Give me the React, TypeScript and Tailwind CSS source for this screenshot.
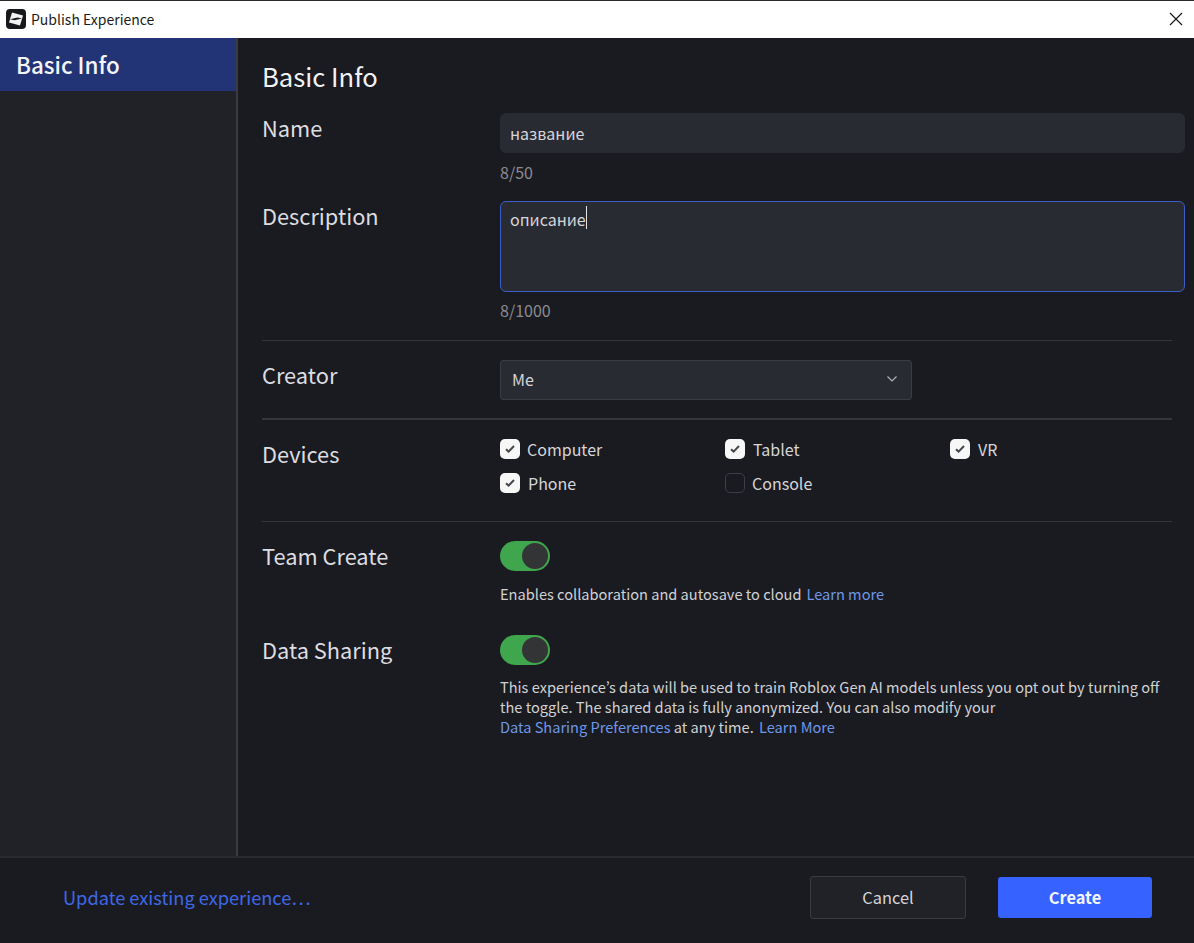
const Check = () => (
  <span className="flex h-5 w-5 items-center justify-center rounded-[5px] bg-[#f7f7f8]">
    <svg width="12" height="10" viewBox="0 0 12 10" fill="none">
      <path d="M2 5.2 4.6 7.6 10 2" stroke="#45474d" strokeWidth="2" />
    </svg>
  </span>
);

const Device = ({ label, checked = true, gap }: { label: string; checked?: boolean; gap: string }) => (
  <div className={`flex h-5 items-center ${gap}`}>
    {checked ? <Check /> : <span className="h-5 w-5 rounded-[5px] border border-[#3c3e45]" />}
    <span className="text-[16px] leading-5 text-[#d5d6d9]">{label}</span>
  </div>
);

const Toggle = () => (
  <div className="flex h-[30px] w-[50px] items-center justify-end rounded-full bg-[#3fa64e] pr-[2px]">
    <span className="h-[26px] w-[26px] rounded-full bg-[#333436]" />
  </div>
);

const Label = ({ children, className = "" }: { children: string; className?: string }) => (
  <div className={`w-[238px] shrink-0 text-[21.8px] leading-8 text-[#dcdde0] ${className}`}>{children}</div>
);

export default function App() {
  return (
    <div
      className="flex h-[943px] w-[1194px] flex-col overflow-hidden bg-[#1a1b20]"
      style={{ fontFamily: '"Noto Sans CJK JP", "Noto Sans", sans-serif' }}
    >
      <div className="flex h-[38px] shrink-0 items-center justify-between border-t border-t-[#2a2a2a] bg-white pb-[1px] pl-[6px] pr-[11px]">
        <div className="flex items-center gap-[5px]">
          <svg width="20" height="20" viewBox="0 0 20 20">
            <rect width="20" height="20" rx="4" fill="#17181b" />
            <path d="M6 3.6 17 6.4 14 16.6 3 13.6Z" fill="#f2f2f2" />
            <path d="M4 10.2 11.5 8.6 16 9.4 8.5 11.2Z" fill="#17181b" />
          </svg>
          <span className="text-[14px] leading-5 text-[#1c1c1c]">Publish Experience</span>
        </div>
        <svg width="14" height="14" viewBox="0 0 14 14" stroke="#111" strokeWidth="1.1">
          <path d="M1 1 13 13M13 1 1 13" />
        </svg>
      </div>

      <div className="flex min-h-0 flex-1">
        <aside className="w-[238px] shrink-0 border-r-2 border-r-[#3a3b41] bg-[#212227]">
          <div className="flex h-[53px] items-center bg-[#223475] pb-[2px] pl-4 text-[22.4px] font-medium leading-8 text-[#f4f5f8]">
            Basic Info
          </div>
        </aside>

        <main className="min-w-0 flex-1 pl-6 pr-[9px]">
          <h1 className="mt-[22px] text-[25.6px] font-normal leading-8 text-[#f1f2f4]">Basic Info</h1>

          <div className="mt-5 flex">
            <Label>Name</Label>
            <div className="mt-px flex-1">
              <div className="flex h-10 items-center rounded-md bg-[#292b33] px-[10px] text-[16px] text-[#d5d6d9]">
                название
              </div>
              <div className="mt-[7px] text-[16px] leading-[24px] text-[#8b8c90]">8/50</div>
            </div>
          </div>

          <div className="mt-[17px] flex">
            <Label className="mt-[-1px]">Description</Label>
            <div className="flex-1">
              <div className="flex h-[91px] items-start rounded-md border border-[#3d5ec9] bg-[#292b33] px-[9px] pt-[3px] text-[16px] leading-7 text-[#d5d6d9]">
                описание
                <span className="mt-[1px] h-[23px] w-px bg-[#e4e4e4]" />
              </div>
              <div className="mt-[6px] text-[16px] leading-[24px] text-[#8b8c90]">8/1000</div>
            </div>
          </div>

          <div className="mr-[13px]">
            <div className="mt-[18px] flex border-t border-t-[#35363b] pt-[19px]">
              <Label className="mt-[-1px]">Creator</Label>
              <div className="flex h-10 w-[412px] items-center justify-between rounded-[3px] border border-[#3a3c43] bg-[#292b33] pb-[2px] pl-[11px] pr-[13px] text-[16px] text-[#d5d6d9]">
                Me
                <svg width="12" height="8" viewBox="0 0 12 8" fill="none" stroke="#b5b6ba" strokeWidth="1.1">
                  <path d="M1.5 1.5 6 6l4.5-4.5" />
                </svg>
              </div>
            </div>

            <div className="mt-[18px] flex border-t-2 border-t-[#35363b] pt-[19px]">
              <Label className="mt-[-1px]">Devices</Label>
              <div className="grid grid-cols-[225px_225px_auto] gap-y-[14px]">
                <Device label="Computer" gap="gap-[7px]" />
                <Device label="Tablet" gap="gap-2" />
                <Device label="VR" gap="gap-2" />
                <Device label="Phone" gap="gap-2" />
                <Device label="Console" checked={false} gap="gap-[7px]" />
              </div>
            </div>

            <div className="mt-[28px] flex border-t border-t-[#35363b] pt-[19px]">
              <Label className="mt-[-1px]">Team Create</Label>
              <div>
                <Toggle />
                <p className="mt-[13px] text-[14.6px] leading-5 text-[#d0d1d4]">
                  Enables collaboration and autosave to cloud
                  <a className="ml-[5px] text-[#6e97e8]">Learn more</a>
                </p>
              </div>
            </div>

            <div className="mt-[31px] flex">
              <Label className="mt-[-1px]">Data Sharing</Label>
              <div className="flex-1">
                <Toggle />
                <p className="mt-3 whitespace-nowrap text-[14.6px] leading-5 text-[#d0d1d4]">
                  This experience’s data will be used to train Roblox Gen AI models unless you opt out by turning off
                  <br />
                  the toggle. The shared data is fully anonymized. You can also modify your
                  <br />
                  <a className="text-[#6e97e8]">Data Sharing Preferences</a> at any time.{" "}
                  <a className="ml-[2px] text-[#6e97e8]">Learn More</a>
                </p>
              </div>
            </div>
          </div>
        </main>
      </div>

      <footer className="flex h-[87px] shrink-0 items-center justify-between border-t-2 border-t-[#2a2b30] pb-[6px] pl-[63px] pr-[42px]">
        <a className="mb-[2px] text-[18.2px] leading-7 text-[#3f68e6]">Update existing experience…</a>
        <div className="flex items-center gap-8">
          <button className="h-[43px] w-[156px] rounded-[3px] border border-[#3a3b41] bg-[#212227] text-[16.4px] text-[#d5d6d9]">
            Cancel
          </button>
          <button className="h-[41px] w-[154px] rounded-[3px] bg-[#3662ff] text-[16.4px] font-bold text-[#f4f6ff]">
            Create
          </button>
        </div>
      </footer>
    </div>
  );
}
